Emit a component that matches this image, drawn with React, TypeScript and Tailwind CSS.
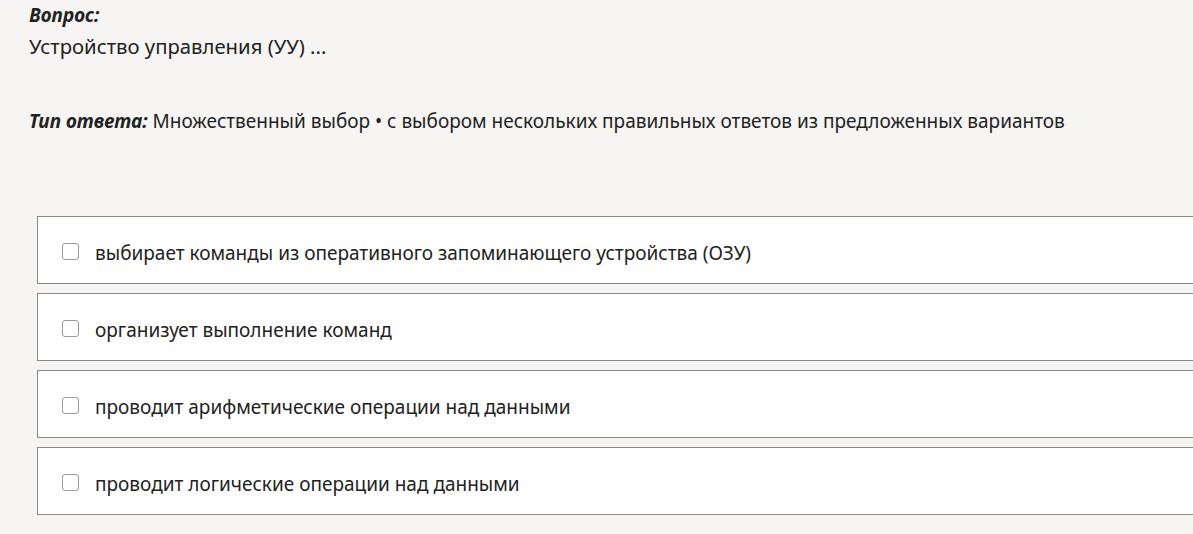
import React from "react";

const options = [
  "выбирает команды из оперативного запоминающего устройства (ОЗУ)",
  "организует выполнение команд",
  "проводит арифметические операции над данными",
  "проводит логические операции над данными",
];

export default function App() {
  return (
    <div
      className="h-[534px] w-[1193px] overflow-hidden bg-[#f6f5f3] text-[#222]"
      style={{ fontFamily: '"Noto Sans", "Open Sans", sans-serif' }}
    >
      <div className="pl-[29px] pt-[3px]">
        <div className="text-[19px] font-bold italic leading-[25px]">Вопрос:</div>
        <div className="mt-[5px] text-[20.3px] leading-[26px]">Устройство управления (УУ) ...</div>
        <div className="mt-[50px] text-[19px] leading-[24px]">
          <span className="font-bold italic">Тип ответа:</span> Множественный выбор • с выбором нескольких
          правильных ответов из предложенных вариантов
        </div>
      </div>
      <div className="ml-[37px] mt-[83px] flex w-[1200px] flex-col gap-[9px]">
        {options.map((o) => (
          <label
            key={o}
            className="flex h-[68px] items-start gap-[16px] border border-[#8a8a8a] bg-white pl-[24px] pt-[23px]"
          >
            <span className="mt-[3px] h-[17px] w-[17px] shrink-0 rounded-[3px] border border-[#9a9a9a] bg-white" />
            <span className="text-[19px] leading-[26px]">{o}</span>
          </label>
        ))}
      </div>
    </div>
  );
}
